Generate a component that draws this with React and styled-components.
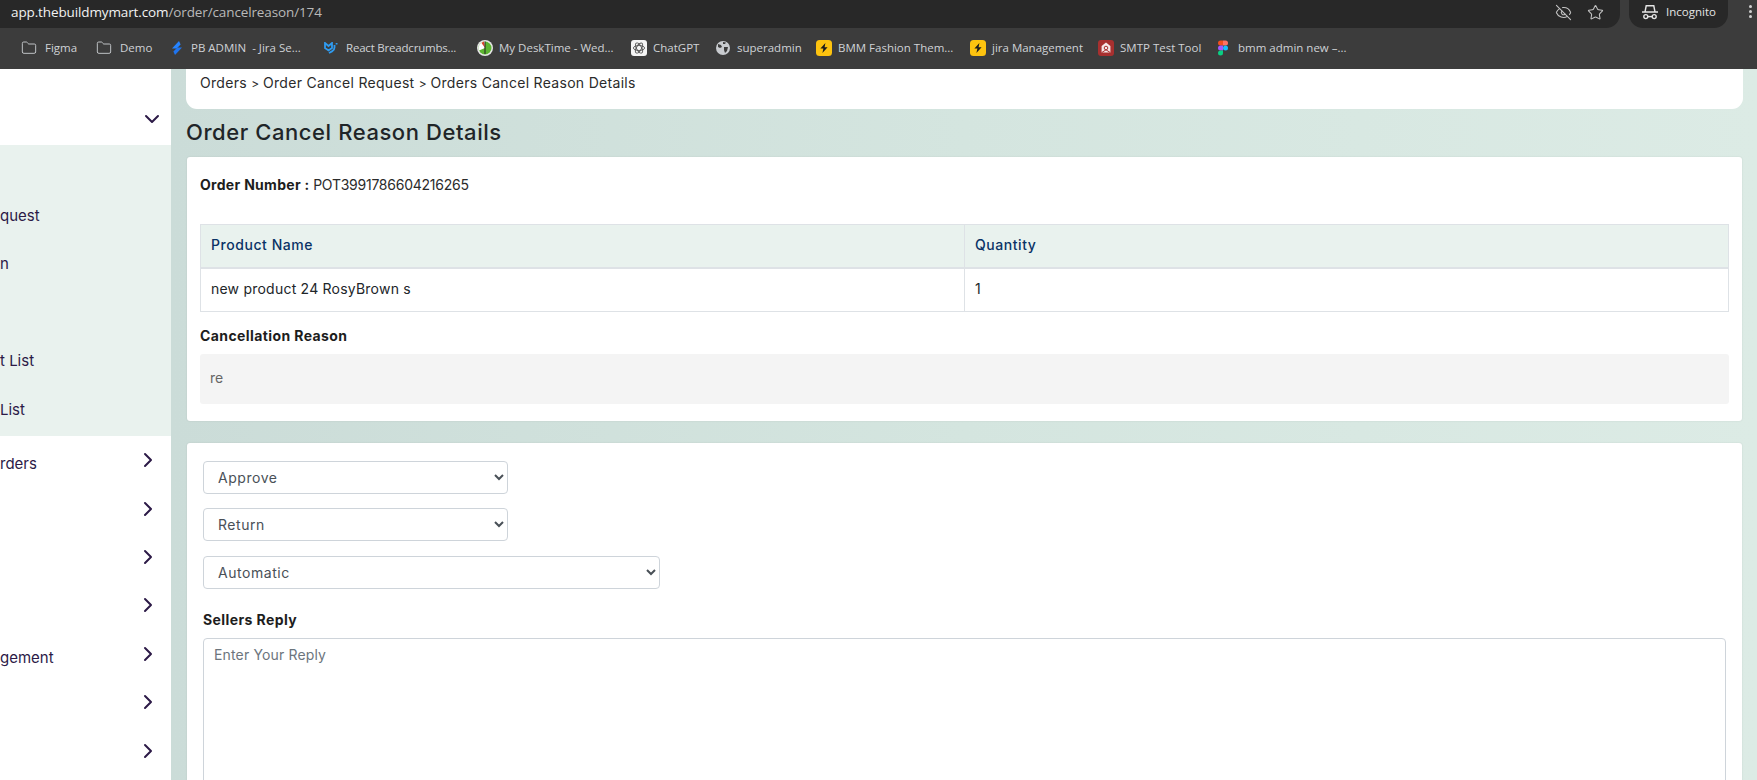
import React from 'react'
import styled, { createGlobalStyle } from 'styled-components'
import { ChevronDown, ChevronRight, EyeOff, Folder, Star } from 'lucide-react'

const GlobalStyle = createGlobalStyle`
  html, body {
    margin: 0;
    height: 100%;
    overflow: hidden;
  }
  * {
    box-sizing: border-box;
  }
`

const Page = styled.div`
  width: 1757px;
  height: 780px;
  display: flex;
  flex-direction: column;
  overflow: hidden;
  font-family: Inter, 'Noto Sans', sans-serif;
  background: #3c3c3c;
`

const Toolbar = styled.div`
  height: 28px;
  flex: none;
  display: flex;
  align-items: center;
  background: #3c3c3c;
`

const AddressBar = styled.div`
  width: 1620px;
  height: 28px;
  flex: none;
  display: flex;
  align-items: center;
  padding: 0 0 4px 11px;
  background: #282828;
  border-radius: 0 0 14px 0;
  font-family: 'Open Sans', sans-serif;
  font-size: 13.5px;
  letter-spacing: -0.12px;
  color: #b9b9b9;
`

const Host = styled.span`
  color: #f2f2f2;
`

const AddressIcons = styled.div`
  margin-left: auto;
  display: flex;
  align-items: center;
  gap: 15px;
  padding-right: 16px;
  color: #c4c4c4;
`

const IncognitoPill = styled.div`
  width: 99px;
  height: 28px;
  margin-left: 9px;
  flex: none;
  display: flex;
  align-items: center;
  gap: 7px;
  padding: 0 0 5px 12px;
  background: #282828;
  border-radius: 0 0 14px 14px;
  font-family: 'Open Sans', sans-serif;
  font-size: 11.5px;
  color: #e4e4e4;
`

const MenuDots = styled.div`
  margin-left: 21px;
  display: flex;
  flex-direction: column;
  gap: 2px;
  padding-bottom: 5px;
`

const Dot = styled.span`
  width: 3px;
  height: 3px;
  border-radius: 50%;
  background: #d0d0d0;
`

const BookmarkBar = styled.div`
  height: 41px;
  flex: none;
  display: flex;
  align-items: center;
  padding: 0 0 2px 21px;
  background: #3c3c3c;
`

const Bookmark = styled.div`
  width: ${(props) => props.$width}px;
  flex: none;
  display: flex;
  align-items: center;
  gap: ${(props) => props.$gap || 6}px;
  font-family: 'Open Sans', sans-serif;
  font-size: 11.5px;
  letter-spacing: ${(props) => props.$spacing || 0}px;
  white-space: pre;
  color: #cfd2d6;
`

const Body = styled.div`
  flex: 1;
  min-height: 0;
  display: flex;
`

const Sidebar = styled.aside`
  width: 171px;
  flex: none;
  overflow: hidden;
  background: #fff;
  color: #2c1a47;
`

const SideHeader = styled.div`
  height: 76px;
  display: flex;
  justify-content: flex-end;
  padding: 38px 7px 0 0;
`

const SubPanel = styled.div`
  height: 291px;
  background: #e9f2ee;
`

const SubRow = styled.div`
  height: 48.5px;
  padding: 12px 0 0 0;
  font-size: 15px;
  line-height: 20px;
`

const SideRow = styled.div`
  height: 48.4px;
  display: flex;
  align-items: center;
  justify-content: space-between;
  padding-right: 11px;
  font-size: 15px;
`

const SideLabel = styled.span`
  padding-top: 7px;
`

const Main = styled.main`
  flex: 1;
  min-width: 0;
  overflow: hidden;
  padding: 0 14px 0 15px;
  background: linear-gradient(90deg, #cbdcd8 0%, #d4e5df 50%, #dcebe5 100%);
`

const BreadcrumbCard = styled.div`
  height: 40px;
  padding: 5px 0 0 14px;
  background: #fff;
  border-radius: 0 0 11px 11px;
  font-size: 14px;
  line-height: 18px;
  letter-spacing: 0.3px;
  color: #2b2b2b;
`

const CrumbSeparator = styled.span`
  font-size: 12px;
  letter-spacing: -0.4px;
`

const Heading = styled.h1`
  margin: 0;
  height: 48px;
  font-size: 22px;
  line-height: 46px;
  font-weight: 500;
  letter-spacing: 0.57px;
  color: #1f2528;
`

const Card = styled.section`
  margin: 0 1px 22px;
  padding: ${(props) => props.$padding};
  background: #fff;
  border-radius: 3px;
  box-shadow: 0 0 2px rgba(0, 0, 0, 0.1);
`

const OrderLine = styled.p`
  margin: 0 0 21px;
  height: 37px;
  padding-top: 9px;
  font-size: 14px;
  line-height: 20px;
  letter-spacing: -0.25px;
  color: #2b2b2b;
`

const Strong = styled.strong`
  font-weight: 700;
  letter-spacing: 0.3px;
  color: #1d1d1d;
`

const DetailTable = styled.table`
  width: 100%;
  border-collapse: collapse;
  table-layout: fixed;
  font-size: 14px;
`

const HeadCell = styled.th`
  height: 43px;
  padding: 0 10px 2px;
  text-align: left;
  font-weight: 500;
  letter-spacing: 0.55px;
  color: #0a3366;
  background: #e9f2ee;
  border: 1px solid #dee2e6;
  border-bottom-width: 2px;
  width: ${(props) => props.$width || 'auto'};
`

const BodyCell = styled.td`
  height: 44px;
  padding: 0 10px 2px;
  letter-spacing: 0.22px;
  color: #212529;
  border: 1px solid #dee2e6;
`

const SectionLabel = styled.div`
  margin: ${(props) => props.$margin};
  font-size: 14px;
  line-height: 20px;
  font-weight: 700;
  letter-spacing: 0.4px;
  color: #1d1d1d;
`

const ReasonBox = styled.div`
  height: 50px;
  padding: 0 10px 4px;
  display: flex;
  align-items: center;
  background: #f4f4f4;
  border-radius: 3px;
  font-size: 14px;
  color: #666;
`

const FormCard = styled(Card)`
  margin-bottom: 0;
`

const Select = styled.select`
  display: block;
  width: ${(props) => props.$width}px;
  height: 33px;
  margin-bottom: ${(props) => props.$gap}px;
  padding: 0 10px;
  background: #fff;
  border: 1px solid #ced4da;
  border-radius: 4px;
  font-family: Inter, 'Noto Sans', sans-serif;
  font-size: 14px;
  letter-spacing: 0.55px;
  color: #495057;
`

const ReplyBox = styled.textarea`
  display: block;
  width: 1523px;
  height: 300px;
  padding: 7px 10px;
  border: 1px solid #ced4da;
  border-radius: 4px;
  resize: none;
  font-family: Inter, 'Noto Sans', sans-serif;
  font-size: 14px;
  letter-spacing: 0.15px;
  &::placeholder {
    color: #6c757d;
  }
`

const IncognitoIcon = () => (
  <svg width="18" height="16" viewBox="0 0 18 16" fill="none" stroke="#e4e4e4" strokeWidth="1.4">
    <path d="M1 8h16M4 8l1.2-6.2h7.6L14 8" />
    <circle cx="4.8" cy="12.6" r="2" />
    <circle cx="13.2" cy="12.6" r="2" />
    <path d="M6.8 12.6h4.4" />
  </svg>
)

const JiraIcon = () => (
  <svg width="12" height="14" viewBox="0 0 12 14">
    <path d="M8 0L1 7.5h4.6L9.6 3.4z" fill="#2684ff" />
    <path d="M4 14l7-7.5H6.4L2.4 10.6z" fill="#1f74ee" />
  </svg>
)

const MuiIcon = () => (
  <svg width="14" height="12" viewBox="0 0 14 12" fill="none" stroke="#2f9bf0" strokeWidth="1.8">
    <path d="M1 1v5l3.5 2.4L8 6V1L4.5 4 1 1z" />
    <path d="M5 11l3-1.6c1.8-1 2.5-2 2.5-4V3M12.6 1v1.4" />
  </svg>
)

const DeskTimeIcon = () => (
  <svg width="16" height="16" viewBox="0 0 16 16">
    <circle cx="8" cy="8" r="8" fill="#e6e6e6" />
    <circle cx="8" cy="8" r="6.5" fill="#5cb531" />
    <path d="M8 8V1.5A6.5 6.5 0 0 0 2 10.5z" fill="#fff" />
    <path d="M8 8L4.5 3A6.5 6.5 0 0 1 7 1.6z" fill="#d9442b" />
    <path d="M8 1.5V14" stroke="#222" strokeWidth="1" />
  </svg>
)

const ChatGptIcon = () => (
  <svg width="16" height="16" viewBox="0 0 16 16">
    <rect width="16" height="16" rx="3" fill="#f4f4f4" />
    <g fill="none" stroke="#555" strokeWidth="0.9">
      <ellipse cx="8" cy="8" rx="5.6" ry="2.5" />
      <ellipse cx="8" cy="8" rx="5.6" ry="2.5" transform="rotate(60 8 8)" />
      <ellipse cx="8" cy="8" rx="5.6" ry="2.5" transform="rotate(120 8 8)" />
    </g>
  </svg>
)

const GlobeIcon = () => (
  <svg width="14" height="14" viewBox="0 0 14 14">
    <circle cx="7" cy="7" r="7" fill="#c8cbcf" />
    <path d="M2 3l3 1 1 2-2 1-2-1zM8 6h4l-1 4-2 2-1-3zM7 1l3 .5-1 1.5H7z" fill="#3c3c3c" />
  </svg>
)

const BoltIcon = () => (
  <svg width="16" height="16" viewBox="0 0 16 16">
    <rect width="16" height="16" rx="3.5" fill="#fdc30f" />
    <path d="M9.4 3L4.4 8.6h3L6.4 13l5.2-5.8h-3z" fill="#1c1c1c" />
  </svg>
)

const SmtpIcon = () => (
  <svg width="16" height="16" viewBox="0 0 16 16">
    <rect width="16" height="16" rx="3" fill="#a8302f" />
    <path d="M8 2.6L12.4 6v6.6H3.6V6z" fill="#f6e9e9" />
    <circle cx="8" cy="8" r="1.8" fill="none" stroke="#a8302f" strokeWidth="1" />
    <path d="M4 12.4l4-2.6 4 2.6" fill="none" stroke="#a8302f" strokeWidth="1" />
  </svg>
)

const FigmaIcon = () => (
  <svg width="10" height="16" viewBox="0 0 10 15">
    <path d="M5 0H2.5a2.5 2.5 0 0 0 0 5H5z" fill="#f24e1e" />
    <path d="M5 0h2.5a2.5 2.5 0 0 1 0 5H5z" fill="#ff7262" />
    <path d="M5 5H2.5a2.5 2.5 0 0 0 0 5H5z" fill="#a259ff" />
    <circle cx="7.5" cy="7.5" r="2.5" fill="#1abcfe" />
    <path d="M5 10H2.5A2.5 2.5 0 1 0 5 12.5z" fill="#0acf83" />
  </svg>
)

const folder = <Folder size={16} strokeWidth={1.4} color="#c8cbcf" />

const bookmarks = [
  { label: 'Figma', icon: folder, width: 75, gap: 8 },
  { label: 'Demo', icon: folder, width: 75, gap: 8 },
  { label: 'PB ADMIN  - Jira Se...', icon: <JiraIcon />, width: 153, gap: 8 },
  { label: 'React Breadcrumbs...', icon: <MuiIcon />, width: 153, gap: 8, spacing: -0.2 },
  { label: 'My DeskTime - Wed...', icon: <DeskTimeIcon />, width: 154 },
  { label: 'ChatGPT', icon: <ChatGptIcon />, width: 85 },
  { label: 'superadmin', icon: <GlobeIcon />, width: 100, gap: 7 },
  { label: 'BMM Fashion Them...', icon: <BoltIcon />, width: 154 },
  { label: 'jira Management', icon: <BoltIcon />, width: 128 },
  { label: 'SMTP Test Tool', icon: <SmtpIcon />, width: 120 },
  { label: 'bmm admin new –...', icon: <FigmaIcon />, width: 130, gap: 10 },
]

const subItems = ['', 'quest', 'n', '', 't List', 'List']
const sideItems = ['rders', '', '', '', 'gement', '', '']

const App = () => {
  return (
    <Page>
      <GlobalStyle />
      <Toolbar>
        <AddressBar>
          <Host>app.thebuildmymart.com</Host>/order/cancelreason/174
          <AddressIcons>
            <EyeOff size={17} strokeWidth={1.5} />
            <Star size={17} strokeWidth={1.5} />
          </AddressIcons>
        </AddressBar>
        <IncognitoPill>
          <IncognitoIcon />
          Incognito
        </IncognitoPill>
        <MenuDots>
          <Dot />
          <Dot />
          <Dot />
        </MenuDots>
      </Toolbar>
      <BookmarkBar>
        {bookmarks.map((item) => (
          <Bookmark key={item.label} $width={item.width} $gap={item.gap} $spacing={item.spacing}>
            {item.icon}
            {item.label}
          </Bookmark>
        ))}
      </BookmarkBar>
      <Body>
        <Sidebar>
          <SideHeader>
            <ChevronDown size={24} strokeWidth={2} />
          </SideHeader>
          <SubPanel>
            {subItems.map((label, i) => (
              <SubRow key={i}>{label}</SubRow>
            ))}
          </SubPanel>
          {sideItems.map((label, i) => (
            <SideRow key={i}>
              <SideLabel>{label}</SideLabel>
              <ChevronRight size={24} strokeWidth={2} />
            </SideRow>
          ))}
        </Sidebar>
        <Main>
          <BreadcrumbCard>
            Orders <CrumbSeparator>&gt;</CrumbSeparator> Order Cancel Request <CrumbSeparator>&gt;</CrumbSeparator> Orders
            Cancel Reason Details
          </BreadcrumbCard>
          <Heading>Order Cancel Reason Details</Heading>
          <Card $padding="9px 13px 17px">
            <OrderLine>
              <Strong>Order Number : </Strong>POT3991786604216265
            </OrderLine>
            <DetailTable>
              <thead>
                <tr>
                  <HeadCell $width="764px">Product Name</HeadCell>
                  <HeadCell>Quantity</HeadCell>
                </tr>
              </thead>
              <tbody>
                <tr>
                  <BodyCell>new product 24 RosyBrown s</BodyCell>
                  <BodyCell>1</BodyCell>
                </tr>
              </tbody>
            </DetailTable>
            <SectionLabel $margin="14px 0 8px">Cancellation Reason</SectionLabel>
            <ReasonBox>re</ReasonBox>
          </Card>
          <FormCard $padding="18px 16px 0">
            <Select $width={305} $gap={14} defaultValue="Approve">
              <option>Approve</option>
            </Select>
            <Select $width={305} $gap={15} defaultValue="Return">
              <option>Return</option>
            </Select>
            <Select $width={457} $gap={21} defaultValue="Automatic">
              <option>Automatic</option>
            </Select>
            <SectionLabel $margin="0 0 8px">Sellers Reply</SectionLabel>
            <ReplyBox placeholder="Enter Your Reply" />
          </FormCard>
        </Main>
      </Body>
    </Page>
  )
}

export default App
